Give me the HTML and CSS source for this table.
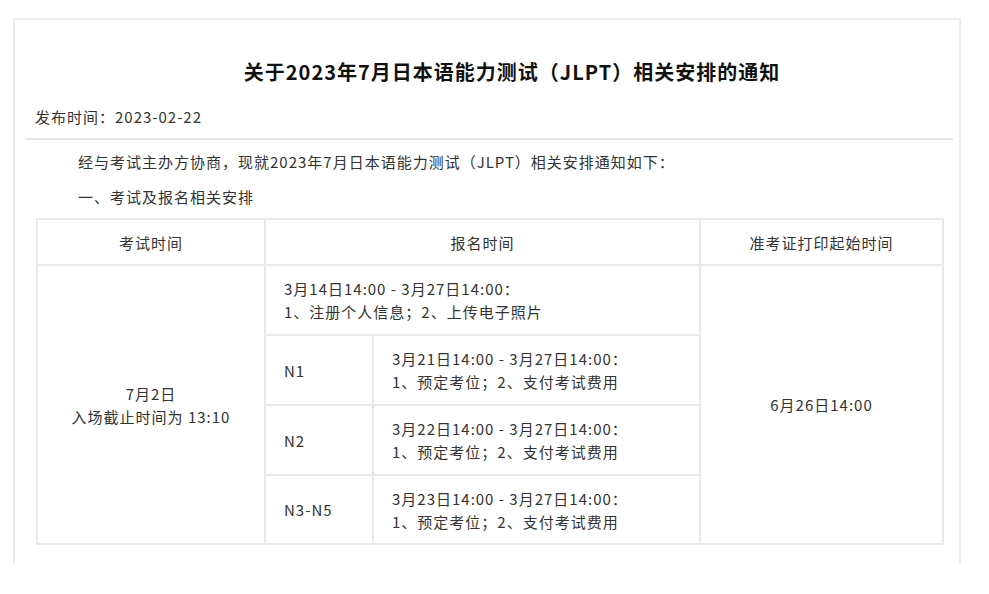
FILE: index.html
```html
<!DOCTYPE html>
<html lang="zh-CN">
<head>
<meta charset="utf-8">
<title>关于2023年7月日本语能力测试（JLPT）相关安排的通知</title>
<link rel="stylesheet" href="styles.css">
</head>
<body>
<div class="page">
  <div class="box">
    <div class="head">
      <h1 class="title">关于2023年7月日本语能力测试（JLPT）相关安排的通知</h1>
      <div class="meta">发布时间：2023-02-22</div>
    </div>
    <div class="content">
      <p class="para">经与考试主办方协商，现就2023年7月日本语能力测试（JLPT）相关安排通知如下：</p>
      <p class="para para-last">一、考试及报名相关安排</p>
      <table class="sched">
        <colgroup>
          <col class="c1"><col class="c2"><col class="c3"><col class="c4">
        </colgroup>
        <tr class="r-head">
          <th>考试时间</th>
          <th colspan="2">报名时间</th>
          <th>准考证打印起始时间</th>
        </tr>
        <tr class="r-row">
          <td rowspan="4" class="center">7月2日<br>入场截止时间为 13:10</td>
          <td colspan="2">3月14日14:00 - 3月27日14:00：<br>1、注册个人信息；2、上传电子照片</td>
          <td rowspan="4" class="center">6月26日14:00</td>
        </tr>
        <tr class="r-row">
          <td>N1</td>
          <td>3月21日14:00 - 3月27日14:00：<br>1、预定考位；2、支付考试费用</td>
        </tr>
        <tr class="r-row">
          <td>N2</td>
          <td>3月22日14:00 - 3月27日14:00：<br>1、预定考位；2、支付考试费用</td>
        </tr>
        <tr class="r-last">
          <td>N3-N5</td>
          <td>3月23日14:00 - 3月27日14:00：<br>1、预定考位；2、支付考试费用</td>
        </tr>
      </table>
    </div>
  </div>
</div>
</body>
</html>
```

FILE: styles.css
```css
html, body {
  margin: 0;
  padding: 0;
  background: #fff;
}
body {
  font-family: "Noto Sans CJK SC", "Noto Sans", sans-serif;
  font-size: 15px;
  letter-spacing: 1px;
  color: #333;
}
.page {
  padding: 18px 0 0 13px;
}
.box {
  width: 944px;
  height: 543px;
  border: 2px solid #ececec;
  border-bottom: none;
  overflow: hidden;
}
.head {
  margin: 0 6px 0 10px;
  border-bottom: 2px solid #e6e6e6;
  padding-bottom: 9px;
}
.title {
  margin: 38px 0 0 0;
  padding-left: 46px;
  text-align: center;
  font-size: 20px;
  line-height: 28px;
  font-weight: 700;
  color: #111;
}
.meta {
  margin-top: 19px;
  padding-left: 10px;
  line-height: 24px;
}
.content {
  padding: 10px 0 0 21px;
}
.para {
  margin: 0 0 11px 0;
  padding-left: 42px;
  line-height: 24px;
}
.para-last {
  margin-bottom: 9px;
}
.sched {
  width: 906px;
  table-layout: fixed;
  border-collapse: collapse;
  border: 2px solid #e8e8e8;
}
.c1 { width: 228px; }
.c2 { width: 108px; }
.c3 { width: 327px; }
.c4 { width: 243px; }
.sched th,
.sched td {
  border: 2px solid #e8e8e8;
  padding: 0 0 0 18px;
  line-height: 23px;
  text-align: left;
  vertical-align: middle;
  font-weight: 400;
}
.sched th,
.sched td.center {
  text-align: center;
  padding: 0;
}
.r-head { height: 46px; }
.r-row { height: 70px; }
.r-last { height: 69px; }
```
